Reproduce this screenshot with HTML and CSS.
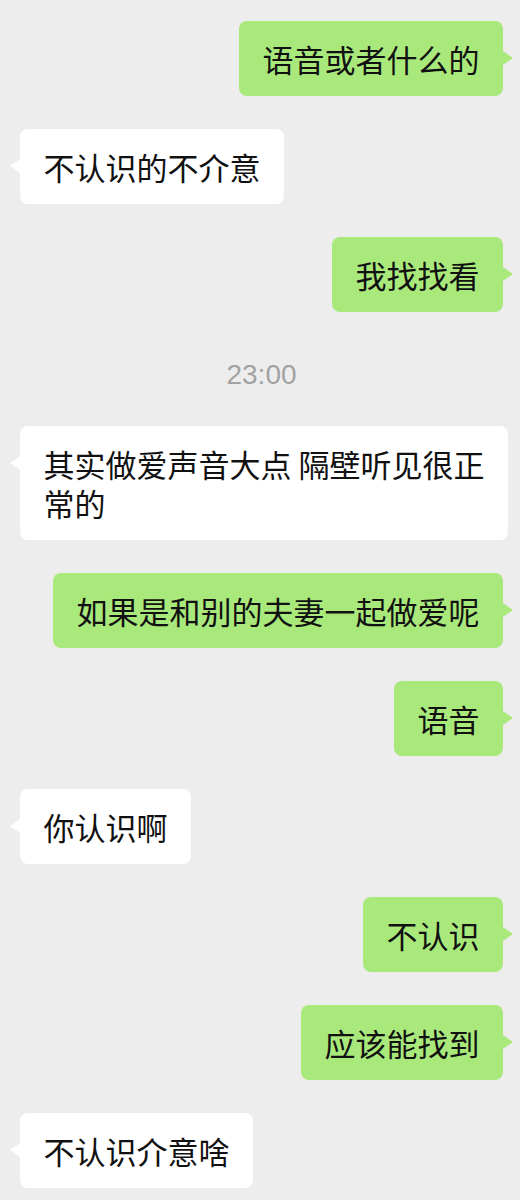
FILE: index.html
```html
<!doctype html>
<html lang="zh-CN">
	<head>
		<meta charset="UTF-8">
		<title>聊天</title>
		<link rel="stylesheet" href="styles.css">
	</head>
	<body>
		<div class="chat">
			<div class="row me"><div class="bubble">语音或者什么的</div></div>
			<div class="row you"><div class="bubble">不认识的不介意</div></div>
			<div class="row me"><div class="bubble">我找找看</div></div>
			<div class="time">23:00</div>
			<div class="row you"><div class="bubble">其实做爱声音大点 隔壁听见很正<br>常的</div></div>
			<div class="row me"><div class="bubble">如果是和别的夫妻一起做爱呢</div></div>
			<div class="row me"><div class="bubble">语音</div></div>
			<div class="row you"><div class="bubble">你认识啊</div></div>
			<div class="row me"><div class="bubble">不认识</div></div>
			<div class="row me"><div class="bubble">应该能找到</div></div>
			<div class="row you"><div class="bubble">不认识介意啥</div></div>
		</div>
	</body>
</html>
```

FILE: styles.css
```css
body{ margin:0; background:#ededed; font-family:"Noto Sans CJK SC", "Noto Sans", sans-serif; color:#111;}
.chat{ display:flex; flex-direction:column; gap:33px; padding:21px 17px 0 20px;}
.row{ display:flex;}
.row.me{ justify-content:flex-end;}
.row.you{ margin-right:-9px;}
.bubble{ position:relative; padding:18px 23.5px; font-size:31px; line-height:39px; white-space:nowrap; border-radius:8px; background:#fff;}
.me .bubble{ background:#a9e97b;}
.bubble::after{ content:""; position:absolute; top:30px; width:0; height:0; border-top:7px solid transparent; border-bottom:7px solid transparent;}
.you .bubble::after{ left:-10px; border-right:10px solid #fff;}
.me .bubble::after{ right:-10px; border-left:10px solid #a9e97b;}
.time{ text-align:center; padding-top:12px; line-height:36px; font-size:28px; color:#a2a2a2; font-family:"Liberation Sans", Arial, sans-serif;}
```
